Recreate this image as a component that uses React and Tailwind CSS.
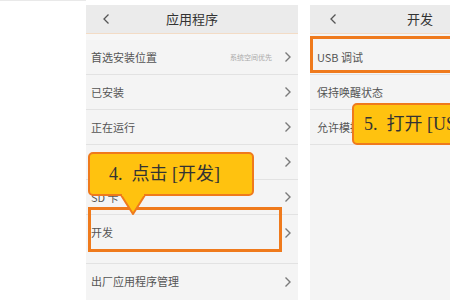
import React from "react";

const font = { fontFamily: '"Noto Sans CJK SC", "Noto Sans", sans-serif' };

function Chevron() {
  return (
    <svg width="8" height="12" viewBox="0 0 8 12" className="shrink-0">
      <path d="M1.5 1.5 L6 6 L1.5 10.5" fill="none" stroke="#7a7a7a" strokeWidth="1.4" />
    </svg>
  );
}

function Back() {
  return (
    <svg width="8" height="12" viewBox="0 0 8 12">
      <path d="M6.5 1.5 L2 6 L6.5 10.5" fill="none" stroke="#555" strokeWidth="1.3" />
    </svg>
  );
}

function Row({ label, right, arrow = true, border = true }) {
  return (
    <div className={`h-[35px] flex items-center pl-[5px] pr-[6px] ${border ? "border-b border-[#e2e2e2]" : ""}`}>
      <span className="text-[11px] text-[#555] flex-1 whitespace-nowrap">{label}</span>
      {right && <span className="text-[7px] text-[#aaa] mr-[12px]">{right}</span>}
      {arrow && <Chevron />}
    </div>
  );
}

export default function App() {
  return (
    <div className="w-[450px] h-[300px] bg-white overflow-hidden relative flex pt-[5px]" style={font}>
      <div className="w-[86px] shrink-0 border-t border-[#e9e9e9] -mt-[5px]" />
      {/* Left panel */}
      <div className="w-[212px] shrink-0 bg-[#f4f4f4] flex flex-col">
        <div className="h-[29px] bg-[#ebebeb] border-b border-[#f3dcc6] flex items-center relative">
          <div className="pl-[16px]"><Back /></div>
          <div className="absolute left-0 right-0 text-center text-[13px] text-[#333]">应用程序</div>
        </div>
        <div className="h-[6px] bg-[#f7f7f7]" />
        <Row label="首选安装位置" right="系统空间优先" />
        <Row label="已安装" />
        <Row label="正在运行" />
        <Row label="" />
        <Row label="SD 卡" />
        <Row label="开发" border={false} />
        <div className="h-[14px] bg-[#f4f4f4] border-b border-[#e2e2e2]" />
        <Row label="出厂应用程序管理" border={false} />
      </div>
      <div className="w-[12px] shrink-0" />
      {/* Right panel */}
      <div className="flex-1 bg-[#f4f4f4] flex flex-col">
        <div className="h-[29px] bg-[#ebebeb] border-b border-[#f3dcc6] flex items-center relative">
          <div className="pl-[19px]"><Back /></div>
          <div className="absolute left-[97px] text-[13px] text-[#333]">开发</div>
        </div>
        <div className="h-[6px]" />
        <div className="h-[35px] flex items-center pl-[7px] border-b border-[#e2e2e2]">
          <span className="text-[11px] text-[#555]">USB 调试</span>
        </div>
        <div className="h-[35px] flex items-center pl-[7px] border-b border-[#e2e2e2]">
          <span className="text-[11px] text-[#555]">保持唤醒状态</span>
        </div>
        <div className="h-[35px] flex items-center pl-[7px] border-b border-[#e2e2e2]">
          <span className="text-[11px] text-[#555]">允许模拟位置</span>
        </div>
      </div>

      {/* Highlight boxes */}
      <div className="absolute left-[88px] top-[207px] w-[194px] h-[45px] border-[3px] border-[#ef7a1c]" />
      <div className="absolute left-[310px] top-[36px] w-[150px] h-[37px] border-[3px] border-[#ef7a1c]" />

      {/* Callout 4 */}
      <div className="absolute left-[88px] top-[152px] w-[166px] h-[44px] bg-[#ffc20f] border-2 border-[#ef7a1c] rounded-[5px] flex items-center pl-[19px]">
        <span className="text-[18px] text-[#333] whitespace-nowrap" style={{ fontFamily: '"Liberation Serif", "Noto Sans CJK SC", serif' }}>4.&nbsp; 点击 [开发]</span>
      </div>
      <svg className="absolute left-[118px] top-[193px]" width="32" height="24" viewBox="0 0 32 24">
        <path d="M3 2 L15 21 L27 2" fill="#ffc20f" stroke="#ef7a1c" strokeWidth="2" strokeLinejoin="round" />
        <rect x="4" y="0" width="22" height="3" fill="#ffc20f" />
      </svg>

      {/* Callout 5 */}
      <div className="absolute left-[352px] top-[103px] w-[140px] h-[42px] bg-[#ffc20f] border-2 border-[#ef7a1c] rounded-[5px] flex items-center pl-[10px]">
        <span className="text-[18px] text-[#333] whitespace-nowrap" style={{ fontFamily: '"Liberation Serif", "Noto Sans CJK SC", serif' }}>5.&nbsp; 打开 [USB 调试]</span>
      </div>
    </div>
  );
}
